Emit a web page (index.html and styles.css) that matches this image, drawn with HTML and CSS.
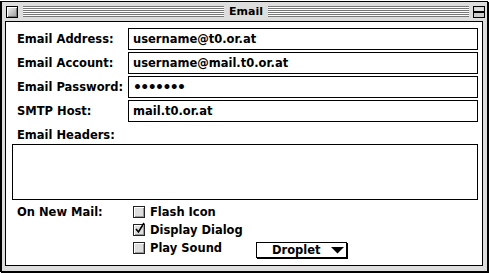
FILE: index.html
```html
<!DOCTYPE html>
<html>
<head>
<meta charset="utf-8">
<link rel="stylesheet" href="styles.css">
</head>
<body>
<div class="window">
  <div class="titlebar">
    <span class="closebox"></span>
    <span class="stripes"></span>
    <span class="title">Email</span>
    <span class="stripes"></span>
    <span class="shadebox">
      <svg width="12" height="12" viewBox="0 0 12 12"><rect x="0.5" y="0.5" width="11" height="11" fill="#ccc" stroke="#000"/><rect x="1.5" y="1.5" width="9" height="4" fill="#ddd" stroke="#fff" stroke-width="0"/><line x1="1" y1="5.5" x2="11" y2="5.5" stroke="#000"/><line x1="1" y1="6.5" x2="11" y2="6.5" stroke="#000"/></svg>
    </span>
  </div>
  <div class="content">
    <div class="fields">
      <div class="label">Email Address:</div>
      <div class="field">username@t0.or.at</div>
      <div class="label">Email Account:</div>
      <div class="field">username@mail.t0.or.at</div>
      <div class="label">Email Password:</div>
      <div class="field"><span class="dots">&#8226;&#8226;&#8226;&#8226;&#8226;&#8226;&#8226;</span></div>
      <div class="label">SMTP Host:</div>
      <div class="field">mail.t0.or.at</div>
    </div>
    <div class="headers-label">Email Headers:</div>
    <div class="headers-box"></div>
    <div class="notify">
      <div class="label">On New Mail:</div>
      <div class="check"><span class="box"></span>Flash Icon</div>
      <div></div>
      <div></div>
      <div class="check"><span class="box checked"><svg width="14" height="14" viewBox="0 0 14 14"><path d="M3 7 L5.5 10 L11 1" fill="none" stroke="#000" stroke-width="1.6"/></svg></span>Display Dialog</div>
      <div></div>
      <div></div>
      <div class="check"><span class="box"></span>Play Sound</div>
      <div class="popup"><span>Droplet</span><svg class="arrow" width="13" height="7" viewBox="0 0 13 7"><polygon points="0,0 13,0 6.5,6.5" fill="#000"/></svg></div>
    </div>
  </div>
</div>
</body>
</html>
```
FILE: styles.css
```css
html, body {
  margin: 0;
  padding: 0;
  background: #fff;
}
body {
  width: 489px;
  height: 273px;
  overflow: hidden;
  font-family: "DejaVu Sans", sans-serif;
  font-weight: bold;
  font-size: 11.5px;
  color: #000;
}
.window {
  box-sizing: border-box;
  width: 488px;
  height: 271px;
  margin-top: 1px;
  border: 1px solid #000;
  border-left-width: 2px;
  box-shadow: 1px 1px 0 #000;
  background: #ddd;
  display: flex;
  flex-direction: column;
  padding: 0 4px 5px 3px;
}
.titlebar {
  height: 19px;
  flex: none;
  display: flex;
  align-items: center;
  margin-right: -2px;
}
.closebox {
  box-sizing: border-box;
  width: 12px;
  height: 12px;
  margin-left: 1px;
  border: 1px solid #000;
  background: linear-gradient(135deg, #f4f4f4, #9a9a9a);
  box-shadow: inset 1px 1px 0 #fff, inset -1px -1px 0 #777;
}
.stripes {
  flex: 1;
  height: 11px;
  margin: 0 5px;
  background: repeating-linear-gradient(to bottom, #777 0 1px, #fff 1px 2px);
}
.stripes:nth-of-type(4) {
  margin-right: 4px;
}
.title {
  line-height: 14px;
  font-size: 11px;
}
.shadebox {
  width: 12px;
  height: 12px;
  display: flex;
}
.content {
  flex: 1;
  border: 1px solid #000;
  background: #fff;
  padding: 6px 4px 0 6px;
}
.fields {
  display: grid;
  grid-template-columns: 116px 1fr;
  grid-auto-rows: 22px;
  row-gap: 2px;
}
.label {
  padding-left: 5px;
  align-self: center;
  white-space: nowrap;
}
.field {
  border: 1px solid #000;
  padding-left: 4px;
  display: flex;
  align-items: center;
  white-space: nowrap;
}
.dots {
  font-size: 14px;
  letter-spacing: -1.6px;
}
.headers-label {
  margin-top: 5px;
  line-height: 16px;
  padding-left: 5px;
}
.headers-box {
  margin-top: 1px;
  height: 56px;
  box-sizing: border-box;
  border: 1px solid #000;
}
.notify {
  display: grid;
  grid-template-columns: 121px 123px auto;
  grid-auto-rows: 18px;
  margin-top: 3px;
}
.check {
  display: flex;
  align-items: center;
  white-space: nowrap;
}
.box {
  position: relative;
  box-sizing: border-box;
  width: 12px;
  height: 12px;
  margin-right: 5px;
  border: 1px solid #222;
  background: #ddd;
  box-shadow: inset 1px 1px 0 #fff, inset -1px -1px 0 #999;
}
.box svg {
  position: absolute;
  left: -1px;
  top: -3px;
}
.popup {
  box-sizing: border-box;
  width: 91px;
  height: 16px;
  margin-top: 3px;
  border: 1px solid #000;
  box-shadow: 1px 1px 0 #000;
  background: #fff;
  display: flex;
  align-items: center;
  padding: 0 2px 0 15px;
}
.arrow {
  margin-left: auto;
}
```
